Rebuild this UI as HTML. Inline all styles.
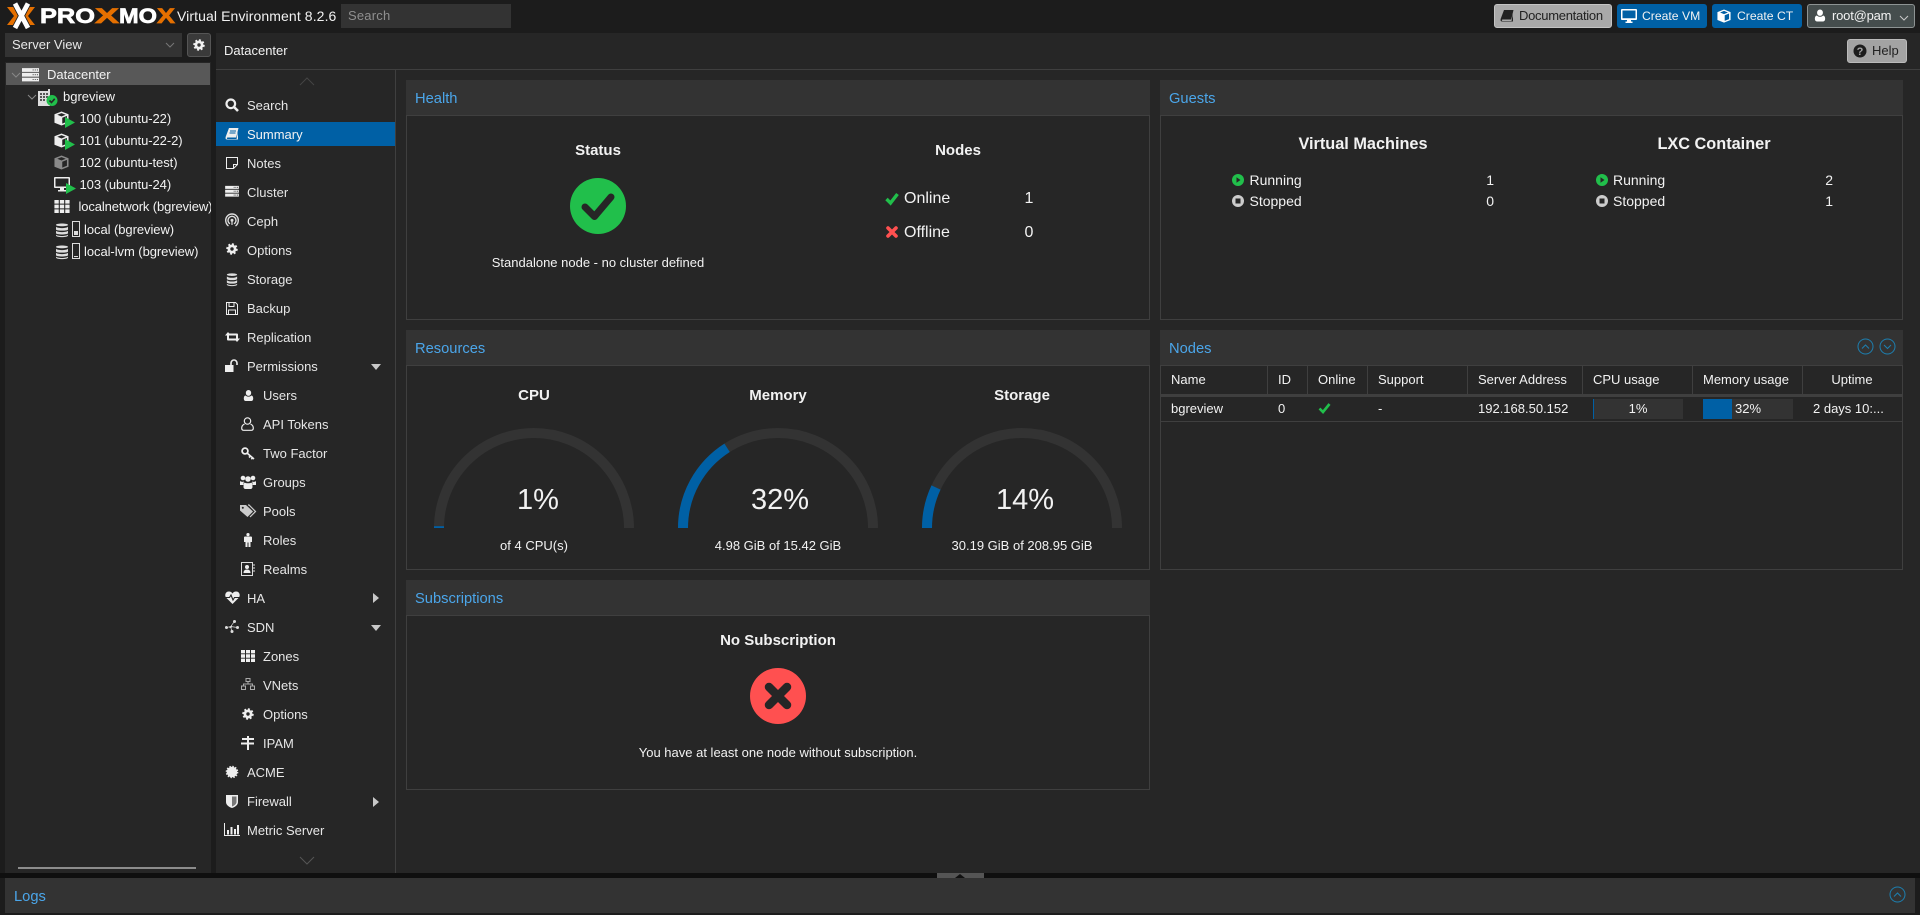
<!DOCTYPE html>
<html><head><meta charset="utf-8"><title>Proxmox</title>
<style>
html,body{margin:0;padding:0;width:1920px;height:915px;overflow:hidden;background:#1c1c1c;font-family:"Liberation Sans",sans-serif;font-size:13px;color:#f2f2f2}
.b{position:absolute;box-sizing:border-box}
.t{position:absolute;white-space:nowrap;line-height:20px;height:20px;margin-top:1px}
.c{transform:translateX(-50%)}
.r{transform:translateX(-100%)}
.n{color:#e6e6e6}
.h{color:#4ba6ea;font-size:14.7px;margin-top:2px}
.bold{font-weight:bold;color:#f2f2f2;margin-top:1px}
.tr{letter-spacing:-.06px}
svg{position:absolute;overflow:visible}
.panel{background:#262626;border:1px solid #3f3f3f}
.head{background:#333}
</style></head><body>
<svg width="0" height="0" style="position:absolute"><defs>
<symbol id="gear" viewBox="0 0 14 14"><circle cx="7" cy="7" r="5.400" fill="none" stroke="currentColor" stroke-width="2.600" stroke-dasharray="2.200 2"/><path fill-rule="evenodd" fill="currentColor" d="M7 1.800a5.200 5.200 0 1 1 0 10.400A5.200 5.200 0 0 1 7 1.800zM7 5a2 2 0 1 0 0 4 2 2 0 0 0 0-4z"/></symbol>
<symbol id="db" viewBox="0 0 14 14" preserveAspectRatio="none"><path fill="currentColor" d="M1 2.500C1 .9 13 .9 13 2.500S1 4.100 1 2.500zM1 4.200c2 1.600 10 1.600 12 0V6.400c0 1.600-12 1.600-12 0zM1 7.700c2 1.600 10 1.600 12 0V9.700c0 1.600-12 1.600-12 0zM1 11c2 1.600 10 1.600 12 0v.8c0 1.900-12 1.900-12 0z"/></symbol>
<symbol id="srv" viewBox="0 0 16 14"><path fill="currentColor" fill-rule="evenodd" d="M0 1h16v3.500H0zM0 5.500h16V9H0zM0 10h16v3.500H0zM10 2.200v1h1v-1zM12 2.200v1h1v-1zM14 2.200v1h1v-1zM10 6.700v1h1v-1zM12 6.700v1h1v-1zM14 6.700v1h1v-1zM10 11.200v1h1v-1zM12 11.200v1h1v-1zM14 11.200v1h1v-1z"/></symbol>
<symbol id="th" viewBox="0 0 14 12"><path fill="currentColor" d="M0 0h4v3.400H0zM5 0h4v3.400H5zM10 0h4v3.400h-4zM0 4.300h4v3.400H0zM5 4.300h4v3.400H5zM10 4.300h4v3.400h-4zM0 8.600h4V12H0zM5 8.600h4V12H5zM10 8.600h4V12h-4z"/></symbol>
<symbol id="cube" viewBox="0 0 16 16"><path fill="currentColor" fill-rule="evenodd" d="M8 .5l7.500 3v9L8 15.500.5 12.500v-9zM8 2.200L3.500 4 8 5.800 12.500 4zM8.800 7.200v6.300l5-2V5.200z"/></symbol>
<symbol id="user" viewBox="0 0 14 14"><path fill="currentColor" d="M7 0a3.400 3.400 0 0 1 3.400 3.700C10.400 6 9 7.400 7 7.400S3.600 6 3.600 3.700A3.400 3.400 0 0 1 7 0zM3.300 7c1 1 2.300 1.500 3.700 1.500S9.700 8 10.700 7c1.500.2 2.300 1.700 2.300 3.800C13 12.800 12 14 10.600 14H3.400C2 14 1 12.800 1 10.800 1 8.700 1.800 7.200 3.300 7z"/></symbol>
<symbol id="right" viewBox="0 0 6 10"><path fill="currentColor" d="M0 0l6 5-6 5z"/></symbol>
<symbol id="down" viewBox="0 0 12 8"><path fill="currentColor" d="M1 1h10L6 7z"/></symbol>
</defs></svg>

<!-- top bar -->
<svg style="left:7px;top:3px" width="170" height="26" viewBox="0 0 170 26">
<path fill="#e57000" d="M0 4h8l7 9-7 9H0l7-9zM28 4h-8l-7 9 7 9h8l-7-9z"/>
<path d="M8 0.500L21 25M21 .5L8 25" stroke="#1c1c1c" stroke-width="6.500"/>
<path d="M8 0.500L21 25M21 .5L8 25" stroke="#fff" stroke-width="4.800"/>
<text x="33" y="20" font-family="Liberation Sans" font-weight="bold" font-size="21" fill="#fff" stroke="#fff" stroke-width=".7" textLength="55" lengthAdjust="spacingAndGlyphs">PRO</text>
<text x="88" y="20" font-family="Liberation Sans" font-weight="bold" font-size="21" fill="#e57000" stroke="#e57000" stroke-width=".7" textLength="24" lengthAdjust="spacingAndGlyphs">X</text>
<text x="112" y="20" font-family="Liberation Sans" font-weight="bold" font-size="21" fill="#fff" stroke="#fff" stroke-width=".7" textLength="38" lengthAdjust="spacingAndGlyphs">MO</text>
<text x="150" y="20" font-family="Liberation Sans" font-weight="bold" font-size="21" fill="#e57000" stroke="#e57000" stroke-width=".7" textLength="18" lengthAdjust="spacingAndGlyphs">X</text>
</svg>
<div class="t" style="left:177px;top:5px;font-size:14px;letter-spacing:.1px">Virtual Environment 8.2.6</div>
<div class="b" style="left:341px;top:4px;width:170px;height:24px;background:#333"></div>
<div class="t" style="left:348px;top:5px;color:#8f8f8f;letter-spacing:.2px">Search</div>

<div class="b" style="left:1494px;top:4px;width:118px;height:24px;background:#a9a9a9;border:1px solid #c4c4c4;border-radius:3px"></div>
<svg style="left:1500px;top:9px" width="14" height="14" viewBox="0 0 14 14"><path fill="#222" d="M4 1h9.500l-2.300 9.500H2.500c-.8 0-.8 1.500 0 1.500h9l1.500-7v7.500H2C.5 12.500.3 11 .8 9.500z"/></svg>
<div class="t" style="left:1519px;top:5px;color:#222;letter-spacing:-.28px">Documentation</div>
<div class="b" style="left:1617px;top:4px;width:90px;height:24px;background:#0060a5;border-radius:3px"></div>
<svg style="left:1621px;top:9px" width="16" height="14" viewBox="0 0 16 14"><path fill="#fff" fill-rule="evenodd" d="M1 0h14c.6 0 1 .4 1 1v9c0 .6-.4 1-1 1H10v1.500h1.500V14h-7v-1.500H6V11H1c-.6 0-1-.4-1-1V1c0-.6.4-1 1-1zM1.500 1.500v7.800h13V1.500z"/></svg>
<div class="t" style="left:1642px;top:5px;font-size:12.200px">Create VM</div>
<div class="b" style="left:1712px;top:4px;width:90px;height:24px;background:#0060a5;border-radius:3px"></div>
<svg style="left:1717px;top:9px;color:#fff" width="14" height="14"><use href="#cube"/></svg>
<div class="t" style="left:1737px;top:5px;font-size:12.200px">Create CT</div>
<div class="b" style="left:1807px;top:4px;width:108px;height:24px;background:#454d4d;border:1px solid #8d9393;border-radius:3px"></div>
<svg style="left:1814px;top:9px;color:#fff" width="12" height="13"><use href="#user"/></svg>
<div class="t" style="left:1832px;top:5px;letter-spacing:-.2px">root@pam</div>
<svg style="left:1899px;top:15px" width="10" height="6"><path d="M1 1l4 4 4-4" fill="none" stroke="#c8c8c8"/></svg>

<!-- left tree -->
<div class="b" style="left:5px;top:33px;width:177px;height:24px;background:#333"></div>
<div class="t" style="left:12px;top:34px;color:#e8e8e8">Server View</div>
<svg style="left:165px;top:42px" width="10" height="6"><path d="M1 1l4 4 4-4" fill="none" stroke="#777"/></svg>
<div class="b" style="left:187px;top:33px;width:24px;height:24px;background:#3a3a3a;border:1px solid #555;border-radius:3px"></div>
<svg style="left:193px;top:39px;color:#f2f2f2" width="12" height="12"><use href="#gear"/></svg>
<div class="b" style="left:5px;top:62px;width:206px;height:811px;background:#262626"></div>
<div class="b" style="left:6px;top:63px;width:204px;height:22px;background:#585858"></div>
<svg style="left:11px;top:72px" width="10" height="6"><path d="M1 1l4 4 4-4" fill="none" stroke="#888"/></svg>
<svg style="left:22px;top:67px;color:#eee" width="17" height="15"><use href="#srv"/></svg>
<div class="t" style="left:47px;top:64px">Datacenter</div>
<svg style="left:27px;top:94px" width="10" height="6"><path d="M1 1l4 4 4-4" fill="none" stroke="#888"/></svg>
<svg style="left:38px;top:89px" width="19" height="17" viewBox="0 0 19 17"><path fill="#ddd" d="M0 2h10V0h2v2h0v15H0z"/><path fill="#555" d="M2 4h2v2H2zM5 4h2v2H5zM8 4h2v2H8zM2 7h2v2H2zM5 7h2v2H5zM8 7h2v2H8zM2 10h2v2H2zM5 10h2v2H5z"/><circle cx="14" cy="11.500" r="5.500" fill="#21bf4b"/><path d="M11.500 11.500l2 2 3.200-3.700" stroke="#262626" stroke-width="1.600" fill="none"/></svg>
<div class="t" style="left:63px;top:86px">bgreview</div>
<svg style="left:54px;top:111px;color:#eee" width="15" height="15"><use href="#cube"/></svg><svg style="left:65px;top:117px" width="10" height="11"><path fill="#21bf4b" d="M0 0l10 5.500L0 11z"/></svg>
<div class="t tr" style="left:79.500px;top:108px">100 (ubuntu-22)</div>
<svg style="left:54px;top:133px;color:#eee" width="15" height="15"><use href="#cube"/></svg><svg style="left:65px;top:139px" width="10" height="11"><path fill="#21bf4b" d="M0 0l10 5.500L0 11z"/></svg>
<div class="t tr" style="left:79.500px;top:130px">101 (ubuntu-22-2)</div>
<svg style="left:54px;top:155px;color:#8a8a8a" width="15" height="15"><use href="#cube"/></svg>
<div class="t tr" style="left:79.500px;top:152px">102 (ubuntu-test)</div>
<svg style="left:54px;top:177px" width="18" height="15" viewBox="0 0 18 15"><path fill="#eee" fill-rule="evenodd" d="M1 0h14c.6 0 1 .4 1 1v9c0 .6-.4 1-1 1H10v2h2v1.500H4V13h2v-2H1c-.6 0-1-.4-1-1V1c0-.6.4-1 1-1zM1.500 1.500v8h13v-8z"/></svg><svg style="left:66px;top:183px" width="10" height="11"><path fill="#21bf4b" d="M0 0l10 5.500L0 11z"/></svg>
<div class="t tr" style="left:79.500px;top:174px">103 (ubuntu-24)</div>
<svg style="left:54px;top:200px;color:#eee" width="16" height="13"><use href="#th"/></svg>
<div class="b" style="left:78.500px;top:197px;width:132px;height:20px;overflow:hidden"><div class="t tr" style="left:0;top:0;margin:0;letter-spacing:-.12px">localnetwork (bgreview)</div></div>
<svg style="left:55px;top:222px;color:#ddd" width="14" height="16"><use href="#db"/></svg>
<svg style="left:72px;top:221px" width="8" height="16"><rect x=".5" y=".5" width="7" height="15" fill="none" stroke="#ddd"/><rect x="2" y="10" width="4" height="4" fill="#ddd"/></svg>
<div class="t tr" style="left:84px;top:219px">local (bgreview)</div>
<svg style="left:55px;top:244px;color:#ddd" width="14" height="16"><use href="#db"/></svg>
<svg style="left:72px;top:243px" width="8" height="16"><rect x=".5" y=".5" width="7" height="15" fill="none" stroke="#ddd"/><rect x="2" y="13" width="4" height="1" fill="#ddd"/></svg>
<div class="t tr" style="left:84px;top:241px">local-lvm (bgreview)</div>
<div class="b" style="left:18px;top:867px;width:178px;height:2px;background:#8c8c8c"></div>

<!-- content -->
<div class="b" style="left:216px;top:33px;width:1704px;height:840px;background:#262626"></div>
<div class="t" style="left:224px;top:40px">Datacenter</div>
<div class="b" style="left:216px;top:69px;width:1704px;height:1px;background:#3f3f3f"></div>
<div class="b" style="left:1847px;top:39px;width:60px;height:24px;background:#a3a3a3;border:1px solid #bbb;border-radius:3px"></div>
<svg style="left:1853px;top:44px" width="14" height="14"><circle cx="7" cy="7" r="6.500" fill="#1d1d1d"/><text x="7" y="11" text-anchor="middle" font-family="Liberation Sans" font-weight="bold" font-size="11" fill="#a3a3a3">?</text></svg>
<div class="t" style="left:1872px;top:40px;color:#222">Help</div>

<!-- menu -->
<div class="b" style="left:395px;top:70px;width:1px;height:803px;background:#3f3f3f"></div>
<svg style="left:299px;top:77px" width="16" height="9"><path d="M1 8l7-7 7 7" fill="none" stroke="#444"/></svg>
<svg style="left:299px;top:856px" width="16" height="9"><path d="M1 1l7 7 7-7" fill="none" stroke="#555"/></svg>
<div class="b" style="left:216px;top:122px;width:179px;height:24px;background:#0060a5"></div>

<svg style="left:225px;top:98px" width="14" height="14"><circle cx="5.800" cy="5.800" r="4.300" fill="none" stroke="#eee" stroke-width="2.200"/><path d="M9 9l4 4" stroke="#eee" stroke-width="2.600"/></svg><div class="t n" style="left:247px;top:95px">Search</div>
<svg style="left:225px;top:127px" width="14" height="14" viewBox="0 0 14 14"><path fill="#eee" d="M4 1h9.500l-2.300 9.500H2.500c-.8 0-.8 1.500 0 1.500h9l1.500-7v7.500H2C.5 12.500.3 11 .8 9.500z"/><path stroke="#0060a5" d="M5 4h6M4.500 6h6"/></svg><div class="t" style="left:247px;top:124px;color:#f2f2f2">Summary</div>
<svg style="left:226px;top:157px" width="12" height="12"><path d="M.5.500h11v7l-4 4h-7z" fill="none" stroke="#eee"/><path d="M11 7.500H7.500V11" fill="none" stroke="#eee"/></svg><div class="t n" style="left:247px;top:153px">Notes</div>
<svg style="left:225px;top:185px;color:#eee" width="14" height="12"><use href="#srv"/></svg><div class="t n" style="left:247px;top:182px">Cluster</div>
<svg style="left:225px;top:213px" width="14" height="14" viewBox="0 0 14 14" fill="none" stroke="#ddd"><path stroke-width="1.400" d="M3.500 13C1.500 11.500.7 9.500.7 7.300a6.300 6.300 0 0 1 12.600 0c0 2.200-.8 4.200-2.800 5.700"/><path stroke-width="1.400" d="M5 10.800A4 4 0 0 1 3 7.300a4 4 0 0 1 8 0 4 4 0 0 1-2 3.500"/><circle cx="7" cy="7.300" r="1.500" fill="#ddd" stroke="none"/><path stroke-width="1.200" d="M7 8.500V12"/></svg><div class="t n" style="left:247px;top:211px">Ceph</div>
<svg style="left:226px;top:243px;color:#eee" width="12" height="12"><use href="#gear"/></svg><div class="t n" style="left:247px;top:240px">Options</div>
<svg style="left:226px;top:272px;color:#ddd" width="12" height="15"><use href="#db"/></svg><div class="t n" style="left:247px;top:269px">Storage</div>
<svg style="left:226px;top:302px" width="12" height="13"><path d="M.5.500h9l2 2v10H.5z" fill="none" stroke="#eee"/><path d="M3 .5v4h5v-4M2.500 12.500V8h7v4.500" fill="none" stroke="#eee"/></svg><div class="t n" style="left:247px;top:298px">Backup</div>
<svg style="left:225px;top:331px" width="15" height="12" viewBox="0 0 15 12"><path fill="#eee" d="M3 1l3 3.500H4v3h6l2 2H3a1 1 0 0 1-1-1V4.500H0zM12 11L9 7.500h2v-3H5l-2-2h9a1 1 0 0 1 1 1v4h2z"/></svg><div class="t n" style="left:247px;top:327px">Replication</div>
<svg style="left:225px;top:360px" width="14" height="12" viewBox="0 0 14 12"><path fill="#eee" d="M0 5h8.500v7H0z"/><path d="M6 5V3a3 3 0 0 1 6 0v2" fill="none" stroke="#eee" stroke-width="1.600"/></svg><div class="t n" style="left:247px;top:356px">Permissions</div>
<svg style="left:370px;top:363px;color:#c8c8c8" width="12" height="8"><use href="#down"/></svg>
<svg style="left:243px;top:389px;color:#eee" width="11" height="13"><use href="#user"/></svg><div class="t n" style="left:263px;top:385px">Users</div>
<svg style="left:241px;top:417px" width="13" height="14"><circle cx="6.500" cy="4" r="3.200" fill="none" stroke="#eee" stroke-width="1.200"/><path d="M3.500 7C1.500 8 .7 9.500.7 11c0 1.300.7 2.300 2 2.300h7.600c1.300 0 2-1 2-2.300 0-1.500-.8-3-2.800-4" fill="none" stroke="#eee" stroke-width="1.200"/></svg><div class="t n" style="left:263px;top:414px">API Tokens</div>
<svg style="left:241px;top:447px" width="14" height="13" viewBox="0 0 14 13"><circle cx="4" cy="4" r="2.900" fill="none" stroke="#eee" stroke-width="1.800"/><path d="M6 6l7 6M9.500 9l-1.500 1.500M11.500 11l-1.200 1.200" stroke="#eee" stroke-width="1.600"/></svg><div class="t n" style="left:263px;top:443px">Two Factor</div>
<svg style="left:240px;top:475px" width="16" height="14" viewBox="0 0 16 14"><g fill="#eee"><circle cx="3" cy="3" r="2.300"/><circle cx="13" cy="3" r="2.300"/><circle cx="8" cy="4" r="2.800"/><path d="M0 6c1 1 3 1 4 .5C3.500 8 3.500 9 3.500 10H0zM16 6c-1 1-3 1-4 .5.500 1.500.5 2.500.5 3.500H16zM4.500 7.500c1.500 1 5.500 1 7 0 .8 1 1 2.500 1 4.500 0 1-.8 2-1.800 2H5.300c-1 0-1.800-1-1.800-2 0-2 .2-3.500 1-4.500z"/></g></svg><div class="t n" style="left:263px;top:472px">Groups</div>
<svg style="left:240px;top:504px" width="16" height="14" viewBox="0 0 16 14"><path fill="#ccc" d="M0 1h6l7 6.500-5.500 5.500L0 6.500z"/><path d="M8 1h1l6.500 6.500L10 13" fill="none" stroke="#ccc" stroke-width="1.200"/><circle cx="2.800" cy="3.800" r="1" fill="#262626"/></svg><div class="t n" style="left:263px;top:501px">Pools</div>
<svg style="left:244px;top:533px" width="8" height="14" viewBox="0 0 8 14"><circle cx="4" cy="1.600" r="1.600" fill="#eee"/><path fill="#eee" d="M1 3.500h6c.6 0 1 .4 1 1V9H6.500v5h-2V9.500h-1V14h-2V9H0V4.500c0-.6.4-1 1-1z"/></svg><div class="t n" style="left:263px;top:530px">Roles</div>
<svg style="left:241px;top:562px" width="14" height="14" viewBox="0 0 14 14"><rect x=".5" y=".5" width="11" height="13" fill="none" stroke="#ddd"/><circle cx="6" cy="5" r="2" fill="#eee"/><path fill="#eee" d="M2.500 11c0-2 1-3.500 3.500-3.500S9.500 9 9.500 11z"/><path d="M12 3h2M12 6h2M12 9h2" stroke="#ddd"/></svg><div class="t n" style="left:263px;top:559px">Realms</div>
<svg style="left:225px;top:591px" width="15" height="13" viewBox="0 0 15 13"><path fill="#eee" d="M7.500 13L1 6.500C-.5 4.500.2.500 4 .5c1.500 0 2.700.8 3.500 2C8.300 1.300 9.500.5 11 .5c3.800 0 4.500 4 3 6z"/><path d="M0 6.500h4.500l1.500-2.500 2 5 1.500-2.500H15" fill="none" stroke="#262626" stroke-width="1.100"/></svg><div class="t n" style="left:247px;top:588px">HA</div>
<svg style="left:373px;top:593px;color:#c8c8c8" width="6" height="10"><use href="#right"/></svg>
<svg style="left:225px;top:620px" width="14" height="14" viewBox="0 0 14 14"><g fill="#ddd"><circle cx="1.500" cy="7.500" r="1.500"/><circle cx="5.500" cy="6.500" r="1.500"/><circle cx="9.500" cy="1.500" r="1.500"/><circle cx="12.500" cy="7.500" r="1.500"/><circle cx="7" cy="11.500" r="1.500"/></g><path d="M1.500 7.500l4-1 4-5M5.500 6.500l7 1M5.500 6.500L7 11.500" stroke="#ddd" stroke-width=".7"/></svg><div class="t n" style="left:247px;top:617px">SDN</div>
<svg style="left:370px;top:624px;color:#c8c8c8" width="12" height="8"><use href="#down"/></svg>
<svg style="left:241px;top:650px;color:#eee" width="14" height="12"><use href="#th"/></svg><div class="t n" style="left:263px;top:646px">Zones</div>
<svg style="left:241px;top:678px" width="14" height="12" viewBox="0 0 14 12"><g fill="none" stroke="#aaa"><rect x="5" y=".5" width="4" height="3"/><rect x=".5" y="8" width="4" height="3.500"/><rect x="9.500" y="8" width="4" height="3.500"/><path d="M7 3.500v2.500M2.500 8V6h9v2"/></g></svg><div class="t n" style="left:263px;top:675px">VNets</div>
<svg style="left:242px;top:708px;color:#eee" width="12" height="12"><use href="#gear"/></svg><div class="t n" style="left:263px;top:704px">Options</div>
<svg style="left:241px;top:736px" width="14" height="14" viewBox="0 0 14 14"><path fill="#eee" d="M6 0h2v14H6zM1 2h12v2H1zM0 6.500h13v2H0z"/></svg><div class="t n" style="left:263px;top:733px">IPAM</div>
<svg style="left:226px;top:766px" width="12" height="12" viewBox="0 0 12 12"><circle cx="6" cy="6" r="5.300" fill="#eee"/><circle cx="6" cy="6" r="5.700" fill="none" stroke="#eee" stroke-dasharray="1.500 1.500" stroke-width="1.200"/></svg><div class="t n" style="left:247px;top:762px">ACME</div>
<svg style="left:226px;top:795px" width="12" height="13" viewBox="0 0 12 13"><path fill="#eee" d="M0 0h12v7c0 3-3 5-6 6-3-1-6-3-6-6z"/><path fill="#777" d="M6 1.500h4.500V7c0 2-2.300 3.700-4.500 4.500z"/></svg><div class="t n" style="left:247px;top:791px">Firewall</div>
<svg style="left:373px;top:797px;color:#c8c8c8" width="6" height="10"><use href="#right"/></svg>
<svg style="left:224px;top:823px" width="16" height="13" viewBox="0 0 16 13"><path d="M.5 0v12.500H16" fill="none" stroke="#eee"/><path fill="#eee" d="M3 7h2v4.500H3zM6.500 4h2v7.500h-2zM10 6h2v5.500h-2zM13 2h2v9.500h-2z"/></svg><div class="t n" style="left:247px;top:820px">Metric Server</div>

<!-- Health -->
<div class="b head" style="left:406px;top:80px;width:744px;height:36px"></div>
<div class="t h" style="left:415px;top:87px">Health</div>
<div class="b panel" style="left:406px;top:115px;width:744px;height:205px"></div>
<div class="t c bold" style="left:598px;top:140px;font-size:15px">Status</div>
<svg style="left:570px;top:178px" width="56" height="56"><circle cx="28" cy="28" r="28" fill="#21bf4b"/><path d="M15 29l9.500 9.500L41 19" fill="none" stroke="#262626" stroke-width="7" stroke-linejoin="round" stroke-linecap="round"/></svg>
<div class="t c" style="left:598px;top:252px;font-size:13px">Standalone node - no cluster defined</div>
<div class="t c bold" style="left:958px;top:140px;font-size:15px">Nodes</div>
<svg style="left:885px;top:192px" width="14" height="13"><path d="M1.500 7l4 4L12.500 2" fill="none" stroke="#21bf4b" stroke-width="3.400"/></svg>
<div class="t" style="left:904px;top:188px;font-size:16px">Online</div>
<div class="t c" style="left:1029px;top:188px;font-size:16px">1</div>
<svg style="left:886px;top:226px" width="12" height="12"><path d="M2 2l8 8M10 2l-8 8" stroke="#ff5050" stroke-width="3.600" stroke-linecap="round"/></svg>
<div class="t" style="left:904px;top:222px;font-size:16px">Offline</div>
<div class="t c" style="left:1029px;top:222px;font-size:16px">0</div>

<!-- Guests -->
<div class="b head" style="left:1160px;top:80px;width:743px;height:36px"></div>
<div class="t h" style="left:1169px;top:87px">Guests</div>
<div class="b panel" style="left:1160px;top:115px;width:743px;height:205px"></div>
<div class="t c bold" style="left:1363px;top:133px;font-size:16.300px">Virtual Machines</div>
<div class="t c bold" style="left:1714px;top:133px;font-size:16.300px">LXC Container</div>
<svg style="left:1232px;top:174px" width="12" height="12"><circle cx="6" cy="6" r="6" fill="#21bf4b"/><path d="M4.500 3.200l4 2.800-4 2.800z" fill="#262626"/></svg>
<div class="t" style="left:1249.500px;top:169px;font-size:14px">Running</div><div class="t r" style="left:1494px;top:169px;font-size:14px">1</div>
<svg style="left:1232px;top:195px" width="12" height="12"><circle cx="6" cy="6" r="6" fill="#ccc"/><rect x="3.500" y="3.500" width="5" height="5" fill="#262626"/></svg>
<div class="t" style="left:1249.500px;top:190px;font-size:14px">Stopped</div><div class="t r" style="left:1494px;top:190px;font-size:14px">0</div>
<svg style="left:1596px;top:174px" width="12" height="12"><circle cx="6" cy="6" r="6" fill="#21bf4b"/><path d="M4.500 3.200l4 2.800-4 2.800z" fill="#262626"/></svg>
<div class="t" style="left:1613px;top:169px;font-size:14px">Running</div><div class="t r" style="left:1833px;top:169px;font-size:14px">2</div>
<svg style="left:1596px;top:195px" width="12" height="12"><circle cx="6" cy="6" r="6" fill="#ccc"/><rect x="3.500" y="3.500" width="5" height="5" fill="#262626"/></svg>
<div class="t" style="left:1613px;top:190px;font-size:14px">Stopped</div><div class="t r" style="left:1833px;top:190px;font-size:14px">1</div>

<!-- Resources -->
<div class="b head" style="left:406px;top:330px;width:744px;height:36px"></div>
<div class="t h" style="left:415px;top:337px">Resources</div>
<div class="b panel" style="left:406px;top:365px;width:744px;height:205px"></div>
<div class="t c bold" style="left:534px;top:385px;font-size:15px">CPU</div>
<div class="t c bold" style="left:778px;top:385px;font-size:15px">Memory</div>
<div class="t c bold" style="left:1022px;top:385px;font-size:15px">Storage</div>
<svg style="left:406px;top:420px" width="744" height="115" viewBox="406 420 744 115" fill="none" stroke-width="10">
<path d="M439 528A95 95 0 0 1 629 528" stroke="#333"/>
<path d="M683 528A95 95 0 0 1 873 528" stroke="#333"/>
<path d="M927 528A95 95 0 0 1 1117 528" stroke="#333"/>
<path d="M439 528l0-1.800" stroke="#0060a5" stroke-width="10"/>
<path d="M683 528A95 95 0 0 1 727.100 447.800" stroke="#0060a5"/>
<path d="M927 528A95 95 0 0 1 936 487.500" stroke="#0060a5"/>
</svg>
<div class="t c" style="left:538px;top:489px;font-size:29px">1%</div>
<div class="t c" style="left:780px;top:489px;font-size:29px">32%</div>
<div class="t c" style="left:1025px;top:489px;font-size:29px">14%</div>
<div class="t c" style="left:534px;top:535px">of 4 CPU(s)</div>
<div class="t c" style="left:778px;top:535px">4.98 GiB of 15.42 GiB</div>
<div class="t c" style="left:1022px;top:535px">30.19 GiB of 208.95 GiB</div>

<!-- Nodes -->
<div class="b head" style="left:1160px;top:330px;width:743px;height:36px"></div>
<div class="t h" style="left:1169px;top:337px">Nodes</div>
<svg style="left:1857px;top:338px" width="18" height="18" fill="none" stroke="#1d7fb0"><circle cx="8.500" cy="8.500" r="7.500"/><path d="M5 10.500l3.500-3.500 3.500 3.500"/></svg>
<svg style="left:1879px;top:338px" width="18" height="18" fill="none" stroke="#1d7fb0"><circle cx="8.500" cy="8.500" r="7.500"/><path d="M5 7l3.500 3.500L12 7"/></svg>
<div class="b panel" style="left:1160px;top:365px;width:743px;height:205px"></div>
<div class="b" style="left:1161px;top:394px;width:741px;height:3px;background:#3f3f3f"></div>
<div class="b" style="left:1161px;top:421px;width:741px;height:1px;background:#3f3f3f"></div>
<div class="b" style="left:1267px;top:366px;width:1px;height:28px;background:#3f3f3f"></div>
<div class="b" style="left:1307px;top:366px;width:1px;height:28px;background:#3f3f3f"></div>
<div class="b" style="left:1367px;top:366px;width:1px;height:28px;background:#3f3f3f"></div>
<div class="b" style="left:1467px;top:366px;width:1px;height:28px;background:#3f3f3f"></div>
<div class="b" style="left:1582px;top:366px;width:1px;height:28px;background:#3f3f3f"></div>
<div class="b" style="left:1692px;top:366px;width:1px;height:28px;background:#3f3f3f"></div>
<div class="b" style="left:1802px;top:366px;width:1px;height:28px;background:#3f3f3f"></div>
<div class="t" style="left:1171px;top:369px">Name</div>
<div class="t" style="left:1278px;top:369px">ID</div>
<div class="t" style="left:1318px;top:369px">Online</div>
<div class="t" style="left:1378px;top:369px">Support</div>
<div class="t" style="left:1478px;top:369px">Server Address</div>
<div class="t" style="left:1593px;top:369px">CPU usage</div>
<div class="t" style="left:1703px;top:369px">Memory usage</div>
<div class="t c" style="left:1852px;top:369px">Uptime</div>
<div class="t" style="left:1171px;top:398px">bgreview</div>
<div class="t" style="left:1278px;top:398px">0</div>
<svg style="left:1318px;top:403px" width="13" height="12"><path d="M1.500 5.500l3.500 3.500 6.500-8" fill="none" stroke="#21bf4b" stroke-width="2.600"/></svg>
<div class="t" style="left:1378px;top:398px">-</div>
<div class="t" style="left:1478px;top:398px">192.168.50.152</div>
<div class="b" style="left:1593px;top:399px;width:90px;height:20px;background:#333"></div>
<div class="b" style="left:1593px;top:399px;width:1px;height:20px;background:#0060a5"></div>
<div class="t c" style="left:1638px;top:398px">1%</div>
<div class="b" style="left:1703px;top:399px;width:90px;height:20px;background:#333"></div>
<div class="b" style="left:1703px;top:399px;width:29px;height:20px;background:#0060a5"></div>
<div class="t c" style="left:1748px;top:398px">32%</div>
<div class="t" style="left:1813px;top:398px">2 days 10:...</div>

<!-- Subscriptions -->
<div class="b head" style="left:406px;top:580px;width:744px;height:36px"></div>
<div class="t h" style="left:415px;top:587px">Subscriptions</div>
<div class="b panel" style="left:406px;top:615px;width:744px;height:175px"></div>
<div class="t c bold" style="left:778px;top:630px;font-size:15px">No Subscription</div>
<svg style="left:750px;top:668px" width="56" height="56"><circle cx="28" cy="28" r="28" fill="#ff5050"/><path d="M19 19l18 18M37 19L19 37" stroke="#262626" stroke-width="8.500" stroke-linecap="round"/></svg>
<div class="t c" style="left:778px;top:742px">You have at least one node without subscription.</div>

<!-- bottom -->
<div class="b" style="left:0;top:873px;width:1920px;height:5px;background:#0f0f0f"></div>
<div class="b" style="left:937px;top:873px;width:47px;height:5px;background:#555"></div>
<svg style="left:955px;top:874px" width="10" height="4"><path d="M5 0l5 4H0z" fill="#111"/></svg>
<div class="b" style="left:5px;top:878px;width:1910px;height:35px;background:#333"></div>
<div class="t h" style="left:14px;top:885px">Logs</div>
<svg style="left:1889px;top:886px" width="18" height="18" fill="none" stroke="#1d7fb0"><circle cx="8.500" cy="8.500" r="7.500"/><path d="M5 10.500l3.500-3.500 3.500 3.500"/></svg>
</body></html>
